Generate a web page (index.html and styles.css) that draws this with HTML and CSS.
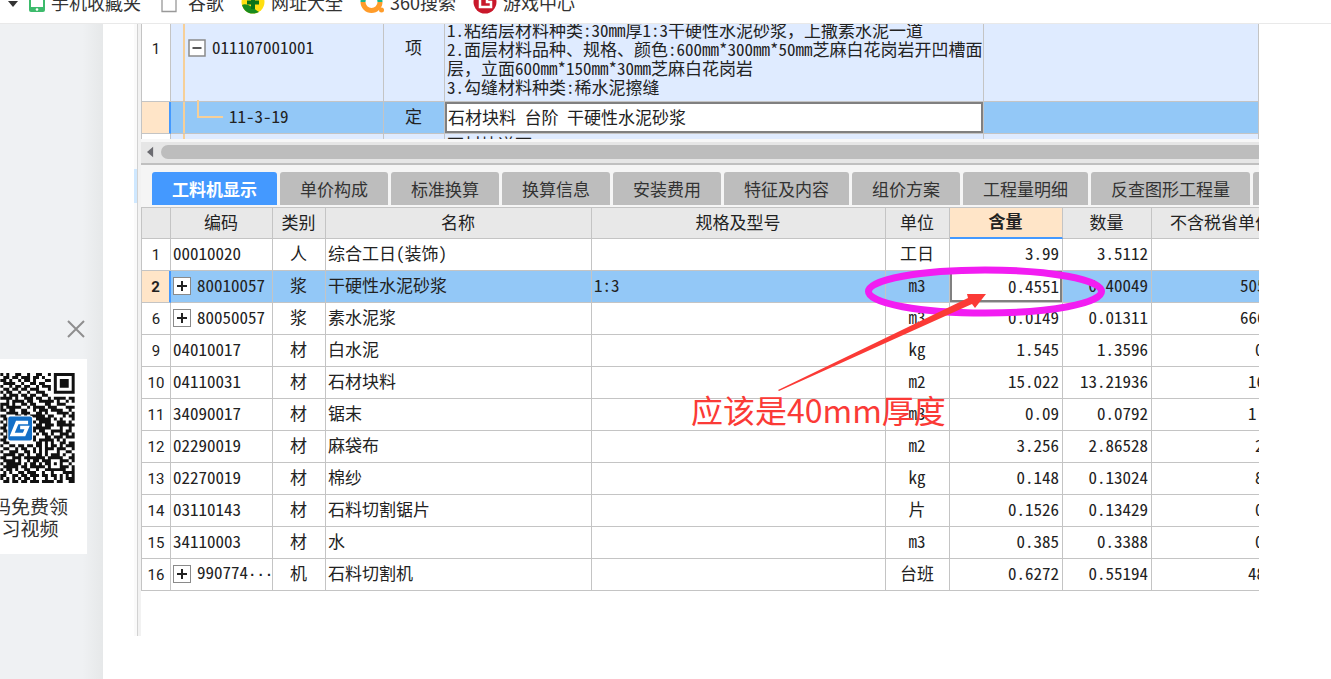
FILE: index.html
```html
<!DOCTYPE html>
<html lang="zh-CN">
<head>
<meta charset="utf-8">
<title>工料机显示</title>
<link rel="stylesheet" href="styles.css">
</head>
<body>
<nav class="bookmarks">
  <svg class="caret" viewBox="0 0 10 24"><path d="M0 11h10L5 17z" fill="#333"/></svg>
  <a class="bookmark" href="#"><svg viewBox="0 0 24 24"><rect x="8" y="0" width="16" height="22" rx="2" fill="#3dbb6c"/><rect x="10" y="2" width="12" height="15" fill="#fff"/><circle cx="16" cy="19.500" r="1.300" fill="#fff"/></svg>手机收藏夹</a>
  <a class="bookmark" href="#"><svg viewBox="0 0 24 24"><path d="M4 1h9l5 5v15.500H4zM13 1v5h5" fill="#fff" stroke="#999" stroke-width="1.300"/></svg>谷歌</a>
  <a class="bookmark" href="#"><svg viewBox="0 0 24 24"><circle cx="12" cy="12" r="11.500" fill="#ffdf10"/><path d="M1 15C7 12 14 20 18 22C10 26 3 22 1 15z" fill="#188b1e"/><path d="M12 6v13M6 12.500h12" stroke="#087318" stroke-width="4"/></svg>网址大全</a>
  <a class="bookmark" href="#"><svg viewBox="0 0 24 24"><path d="M3 12a8.500 8.500 0 0 1 17 0" fill="none" stroke="#1bb58a" stroke-width="5"/><path d="M3 12a8.500 8.500 0 0 0 17 0" fill="none" stroke="#ff9c2a" stroke-width="5"/><circle cx="21.500" cy="20" r="2.500" fill="#ff9c2a"/></svg>360搜索</a>
  <a class="bookmark" href="#"><svg viewBox="0 0 24 24"><circle cx="12" cy="12" r="11.500" fill="#c9182b"/><path d="M7 5v12h6M19 7h-5v5h4v5h-6" fill="none" stroke="#fff" stroke-width="2.500"/></svg>游戏中心</a>
</nav>
<div class="page">
  <aside class="side">
    <button class="close" aria-label="关闭"><svg viewBox="0 0 18 18"><path d="M1 1l16 16M17 1L1 17" stroke="#8e8e8e" stroke-width="2"/></svg></button>
    <section class="qr-card">
      <svg class="qr" id="qr" viewBox="0 0 75 111"></svg>
      <p class="qr-text">码免费领<br>习视频</p>
    </section>
  </aside>
  <main class="article">
    <figure class="shot">
      <div class="rail"><div class="rail-mark"></div></div>
      <div class="app">
        <div class="upper">
          <table class="grid bill">
            <colgroup><col class="w29"><col class="w213"><col class="w61"><col class="w539"><col></colgroup>
            <tbody>
              <tr class="bill-item">
                <td class="num-col">1</td>
                <td class="tree"><div class="node"><button class="toggle" aria-label="折叠"><svg viewBox="0 0 18 18"><rect x="1" y="1" width="16" height="16" fill="#fff" stroke="#8a8a8a" stroke-width="1.500"/><path d="M4.500 9h9" stroke="#222" stroke-width="1.500"/></svg></button>011107001001</div></td>
                <td class="center">项</td>
                <td class="desc">1.粘结层材料种类:30mm厚1:3干硬性水泥砂浆<span class="wide">，</span>上撒素水泥一道<br>2.面层材料品种、规格、颜色:600mm*300mm*50mm芝麻白花岗岩开凹槽面<br>层<span class="wide">，</span>立面600mm*150mm*30mm芝麻白花岗岩<br>3.勾缝材料种类:稀水泥擦缝</td>
                <td></td>
              </tr>
              <tr class="bill-quota">
                <td class="num-col current"></td>
                <td class="tree"><div class="leaf">11-3-19</div></td>
                <td class="center">定</td>
                <td class="edit"><input class="field" aria-label="名称" value="石材块料 台阶 干硬性水泥砂浆"></td>
                <td></td>
              </tr>
              <tr class="bill-next">
                <td class="num-col"></td><td class="tree"></td><td></td><td class="next-desc">石材块道面</td><td></td>
              </tr>
            </tbody>
          </table>
        </div>
        <div class="scroll"><svg class="scroll-arrow" viewBox="0 0 8 12"><path d="M7 0v12L0 6z" fill="#6b6b70"/></svg><div class="thumb"></div></div>
        <div class="tabs">
          <button class="tab active">工料机显示</button><button class="tab">单价构成</button><button class="tab">标准换算</button><button class="tab">换算信息</button><button class="tab">安装费用</button><button class="tab">特征及内容</button><button class="tab">组价方案</button><button class="tab">工程量明细</button><button class="tab">反查图形工程量</button><div class="tab more"></div>
        </div>
        <table class="grid detail">
          <colgroup><col class="w29"><col class="w102"><col class="w53"><col class="w266"><col class="w294"><col class="w64"><col class="w113"><col class="w89"><col></colgroup>
          <thead><tr><th></th><th>编码</th><th>类别</th><th>名称</th><th>规格及型号</th><th>单位</th><th class="sorted">含量</th><th>数量</th><th>不含税省单价</th></tr></thead>
          <tbody>
            <tr><td class="num-col">1</td><td>00010020</td><td class="center">人</td><td>综合工日(装饰)</td><td></td><td class="center">工日</td><td class="right">3.99</td><td class="right">3.5112</td><td></td></tr>
            <tr class="selected"><td class="num-col current">2</td><td><div class="node"><button class="toggle plus" aria-label="展开"></button>80010057</div></td><td class="center">浆</td><td>干硬性水泥砂浆</td><td>1:3</td><td class="center">m3</td><td class="edit"><input class="field right" aria-label="含量" value="0.4551"></td><td class="right">0.40049</td><td class="price hundreds">505</td></tr>
            <tr><td class="num-col">6</td><td><div class="node"><button class="toggle plus" aria-label="展开"></button>80050057</div></td><td class="center">浆</td><td>素水泥浆</td><td></td><td class="center">m3</td><td class="right">0.0149</td><td class="right">0.01311</td><td class="price hundreds">666</td></tr>
            <tr><td class="num-col">9</td><td>04010017</td><td class="center">材</td><td>白水泥</td><td></td><td class="center">kg</td><td class="right">1.545</td><td class="right">1.3596</td><td class="price ones">0</td></tr>
            <tr><td class="num-col">10</td><td>04110031</td><td class="center">材</td><td>石材块料</td><td></td><td class="center">m2</td><td class="right">15.022</td><td class="right">13.21936</td><td class="price tens">16</td></tr>
            <tr><td class="num-col">11</td><td>34090017</td><td class="center">材</td><td>锯末</td><td></td><td class="center">m3</td><td class="right">0.09</td><td class="right">0.0792</td><td class="price tens">1</td></tr>
            <tr><td class="num-col">12</td><td>02290019</td><td class="center">材</td><td>麻袋布</td><td></td><td class="center">m2</td><td class="right">3.256</td><td class="right">2.86528</td><td class="price ones">2</td></tr>
            <tr><td class="num-col">13</td><td>02270019</td><td class="center">材</td><td>棉纱</td><td></td><td class="center">kg</td><td class="right">0.148</td><td class="right">0.13024</td><td class="price ones">8</td></tr>
            <tr><td class="num-col">14</td><td>03110143</td><td class="center">材</td><td>石料切割锯片</td><td></td><td class="center">片</td><td class="right">0.1526</td><td class="right">0.13429</td><td class="price ones">0</td></tr>
            <tr><td class="num-col">15</td><td>34110003</td><td class="center">材</td><td>水</td><td></td><td class="center">m3</td><td class="right">0.385</td><td class="right">0.3388</td><td class="price ones">0</td></tr>
            <tr><td class="num-col">16</td><td><div class="node"><button class="toggle plus" aria-label="展开"></button><span>990774<span class="dots">···</span></span></div></td><td class="center">机</td><td>石料切割机</td><td></td><td class="center">台班</td><td class="right">0.6272</td><td class="right">0.55194</td><td class="price tens">48</td></tr>
          </tbody>
        </table>
      </div>
      <svg class="marks" width="1125" height="612" viewBox="134 24 1125 612">
        <ellipse cx="985" cy="291.500" rx="116.500" ry="21.500" fill="none" stroke="#f21df2" stroke-width="7"/>
        <path d="M778 390L968 298L967 294L986 294L975 308L972 304L779 391z" fill="#fb3a36"/>
      </svg>
      <figcaption class="note">应该是40mm厚度</figcaption>
    </figure>
  </main>
</div>
<script src="script.js"></script>
</body>
</html>
```

FILE: styles.css
```css
* { box-sizing: border-box; }
body {
  margin: 0;
  height: 100vh;
  display: flex;
  flex-direction: column;
  overflow: hidden;
  background: #fff;
  color: #222;
  font: 17px/20px "Noto Sans CJK SC", sans-serif;
}
button, input { font: inherit; color: inherit; padding: 0; border: 0; }
button { background: none; }
svg { display: block; }

.bookmarks {
  flex: none;
  display: flex;
  gap: 17px;
  height: 24px;
  padding-left: 8px;
  overflow: hidden;
  border-bottom: 1px solid #e9e9e9;
}
.bookmarks > * { flex: none; margin-top: -10px; }
.caret { width: 10px; height: 24px; margin-right: -14px; }
.bookmark {
  display: flex;
  gap: 6px;
  height: 24px;
  color: #333;
  font-size: 18px;
  line-height: 24px;
  text-decoration: none;
}
.bookmark svg { width: 24px; height: 24px; overflow: visible; }

.page { flex: 1; display: flex; min-height: 0; }
.side {
  flex: none;
  width: 103px;
  padding-top: 296px;
  background: linear-gradient(90deg, #eff1f3 80%, #e6e8e9);
}
.close { display: block; width: 18px; height: 18px; margin: 0 18px 21px auto; }
.qr-card { width: 87px; height: 195px; padding-top: 14px; background: #fff; overflow: hidden; }
.qr { width: 75px; height: 110px; }
.qr-text {
  width: 68px;
  margin: 12px 0 0;
  display: flex;
  justify-content: flex-end;
  color: #333;
  font-size: 19px;
  line-height: 22px;
  text-align: center;
  white-space: nowrap;
}

.article { flex: 1; min-width: 0; padding: 0 72px 0 31px; }
.shot { position: relative; display: flex; margin: 0; height: 612px; overflow: hidden; }
.rail {
  flex: none;
  width: 7px;
  padding-top: 145px;
  background: linear-gradient(90deg, #fafafa 3px, #d2d2d2 3px, #d2d2d2 4px, #f2f2f2 4px);
}
.rail-mark { width: 3px; height: 34px; background: #cfe8ff; }
.app { flex: 1; min-width: 0; overflow: hidden; font-feature-settings: "hwid" 1; }

.grid { table-layout: fixed; width: 100%; border-spacing: 0; border-left: 1px solid #c4c4c4; }
.grid td, .grid th {
  padding: 0 3px 3px 2px;
  border-right: 1px solid #c4c4c4;
  border-bottom: 1px solid #c4c4c4;
  white-space: nowrap;
  text-align: left;
  font-weight: 400;
}
.w29 { width: 29px; }
.w213 { width: 213px; }
.w61 { width: 61px; }
.w539 { width: 539px; }
.w102 { width: 102px; }
.w53 { width: 53px; }
.w266 { width: 266px; }
.w294 { width: 294px; }
.w64 { width: 64px; }
.w113 { width: 113px; }
.w89 { width: 89px; }
.grid .center { text-align: center; }
.grid .right { text-align: right; }
.grid .num-col {
  padding: 1px 0 0;
  background: #fff;
  font-family: Roboto, sans-serif;
  font-size: 15px;
  text-align: center;
}
.grid .current { background: #ffe5c8; font-weight: 700; border-right: 2px solid #4499ff; }

.upper { height: 115px; overflow: hidden; }
.bill { margin-top: -28px; background: #dfebff; }
.bill-item { height: 106px; }
.bill-quota { height: 32px; background: #93c8f7; }
.bill-next { height: 32px; }
.grid .desc { padding-bottom: 5px; line-height: 19px; vertical-align: bottom; }
.grid .next-desc { padding: 0 0 0 2px; vertical-align: top; }
.wide { font-feature-settings: normal; }
.dots { font-family: "Liberation Mono", monospace; font-size: 14px; font-weight: 700; }
.node { display: flex; align-items: center; gap: 6px; }
.node .toggle { margin-top: 2px; }
.toggle { flex: none; width: 18px; height: 18px; }
.grid .tree {
  padding-left: 17px;
  background: linear-gradient(90deg, transparent 12px, #f6cf98 12px, #f6cf98 14px, transparent 14px);
}
.leaf { display: flex; align-items: center; gap: 6px; padding-left: 9px; }
.leaf::before {
  content: "";
  width: 24px;
  height: 16px;
  margin-top: -14px;
  border-left: 2px solid #f6cf98;
  border-bottom: 2px solid #f6cf98;
}
.grid .edit { padding: 0; }
.field { display: block; width: 100%; height: 31px; padding: 0 1px 3px; border: 2px solid #808080; background: #fff; }

.scroll {
  display: flex;
  align-items: center;
  gap: 7px;
  height: 26px;
  padding: 0 0 1px 6px;
  border-top: 3px solid #f7f7f7;
  border-bottom: 2px solid #c0c0c0;
  background: #e6e6e6;
}
.scroll-arrow { width: 7px; height: 12px; }
.thumb { flex: 1; height: 14px; border-radius: 7px 0 0 7px; background: #bdbdbd; }

.tabs { display: flex; gap: 3px; height: 42px; padding: 7px 0 2px 11px; overflow: hidden; background: #f5f5f5; }
.tab { flex: none; padding: 0 20px; border-radius: 3px 3px 0 0; background: #bdbdbd; color: #333; }
.tab.active { background: #4499ff; color: #fff; font-weight: 700; }

.detail { width: calc(100% + 33px); border-top: 1px solid #c4c4c4; background: #fff; }
.detail th { height: 31px; background: #e8e8e8; text-align: center; }
.detail .sorted { background: #ffe5c8; border-bottom: 2px solid #4499ff; font-weight: 700; }
.detail td { height: 32px; }
.selected { background: #93c8f7; }
.plus {
  border: 1px solid #8a8a8a;
  background:
    linear-gradient(#222, #222) center / 10px 2px no-repeat,
    linear-gradient(#222, #222) center / 2px 10px no-repeat,
    #fff;
}
.grid .hundreds { padding-left: 88px; }
.grid .tens { padding-left: 96px; }
.grid .ones { padding-left: 103px; }

.marks { position: absolute; left: 0; top: 0; }
.note { position: absolute; left: 557px; top: 365px; color: #fb3a36; font-size: 32px; line-height: 40px; white-space: nowrap; }
```

FILE: script.js
```js
const rows = [
  "1010011001001100101111111",
  "0110110111011010001000001",
  "1101001011010001101011101",
  "0111100100110110001011101",
  "1001011011001011101011101",
  "0110110110111000101000001",
  "1011001001001110001111111",
  "0101110110110011000000000",
  "1111010011101100101111011",
  "0010111101100111110100101",
  "1110100110110001100111000",
  "1011111001011110111000111",
  "1101100110010111011110010",
  "0011110111001101000111101",
  "1100011010111110110001011",
  "0110000000001111101010001",
  "1010000000010111100111010",
  "0110000000001101110111111",
  "1100000000011111100010010",
  "0110000000010110011110110",
  "1010000000001011010011101",
  "0110000000010001101110111",
  "1100000000010111110101000",
  "0110000000001101010011011",
  "1001101101101101011010111",
  "0110010110010101110111001",
  "1001110011010101000100110",
  "0111101101001101011101001",
  "1100111011111110111110011",
  "0111101001011011100011101",
  "1011111010110101101010010",
  "0111110110111110100011101",
  "1011010011001001111111001",
  "0101001101110010010001111",
  "1100110110111011011010101",
  "1010101011010001001010111",
  "0110110110111011110110011"
];
let d = "";
rows.forEach((row, y) => {
  [...row].forEach((bit, x) => {
    if (bit === "1") d += `M${x * 3} ${y * 3}h3v3h-3z`;
  });
});
document.getElementById("qr").innerHTML =
  `<path d="${d}" fill="#111"/>` +
  `<rect x="7" y="43" width="26" height="26" rx="3" fill="#fff"/>` +
  `<rect x="8" y="44" width="24" height="24" rx="2" fill="#1470c8"/>` +
  `<path d="M28 50H17L12 62H24L27 55H20" fill="none" stroke="#fff" stroke-width="3.500"/>`;
```
